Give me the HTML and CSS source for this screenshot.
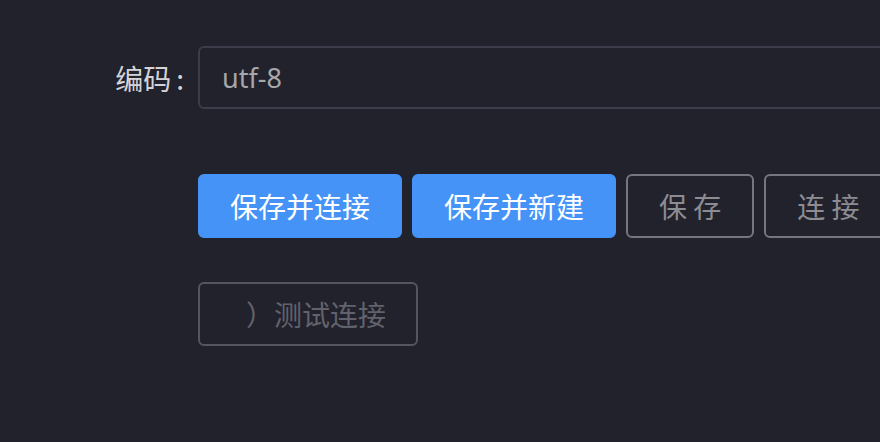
FILE: index.html
```html
<!DOCTYPE html>
<html>
  <head>
    <meta http-equiv="Content-Type" content="text/html; charset=utf-8"/>
    <link rel="stylesheet" href="styles.css">
  </head>
  <body>
    <form class="conn-form">
      <div class="row">
        <label class="row-label" for="charset">编码<span class="colon">:</span></label>
        <div class="row-field">
          <input type="text" id="charset" class="text-input" value="utf-8" />
        </div>
      </div>
      <div class="row actions">
        <div class="row-label"></div>
        <div class="row-field btn-group">
          <button type="button" class="btn btn-primary">保存并连接</button>
          <button type="button" class="btn btn-primary">保存并新建</button>
          <button type="button" class="btn btn-outline">保 存</button>
          <button type="button" class="btn btn-outline">连 接</button>
        </div>
      </div>
      <div class="row test">
        <div class="row-label"></div>
        <div class="row-field">
          <button type="button" class="btn btn-disabled" disabled><span class="spin-slot"></span>）测试连接</button>
        </div>
      </div>
    </form>
  </body>
</html>
```

FILE: styles.css
```css
body {
  margin: 0px;
  padding: 0px;
  background: #22222c;
  overflow: hidden;
  font-family: "Noto Sans", "Noto Sans CJK SC", sans-serif;
  font-size: 28px;
}

.conn-form {
  padding-top: 46px;
  width: 1000px;
}

.row {
  display: flex;
  align-items: center;
}

.row-label {
  width: 198px;
  flex: none;
  box-sizing: border-box;
  text-align: right;
  color: #d4d4d8;
  font-family: "Noto Sans CJK SC", sans-serif;
}

.colon {
  margin: 0px 14px 0px 5px;
}

.text-input {
  box-sizing: border-box;
  width: 760px;
  height: 63px;
  padding: 0px 22px;
  border: 2px solid #3c3c4a;
  border-radius: 6px;
  background: #22222c;
  color: #a6a6ab;
  font-family: "Noto Sans", sans-serif;
  font-size: 27px;
  outline: none;
}

.actions {
  margin-top: 65px;
}

.btn-group {
  display: flex;
  gap: 10px;
}

.btn {
  box-sizing: border-box;
  height: 64px;
  padding: 0px 30px;
  border: 2px solid transparent;
  border-radius: 6px;
  font-family: "Noto Sans CJK SC", sans-serif;
  font-size: 28px;
  line-height: 1;
  white-space: nowrap;
  flex: none;
}

.btn-primary {
  width: 204px;
  background: #4593f7;
  border-color: #4593f7;
  color: #ffffff;
}

.btn-outline {
  padding: 0px 31px;
  background: transparent;
  border-color: #76767e;
  color: #8c8c92;
}

.test {
  margin-top: 44px;
}

.btn-disabled {
  display: flex;
  align-items: center;
  width: 220px;
  background: transparent;
  border-color: #55555f;
  color: #62626c;
}

.spin-slot {
  display: inline-block;
  width: 21px;
}
```
